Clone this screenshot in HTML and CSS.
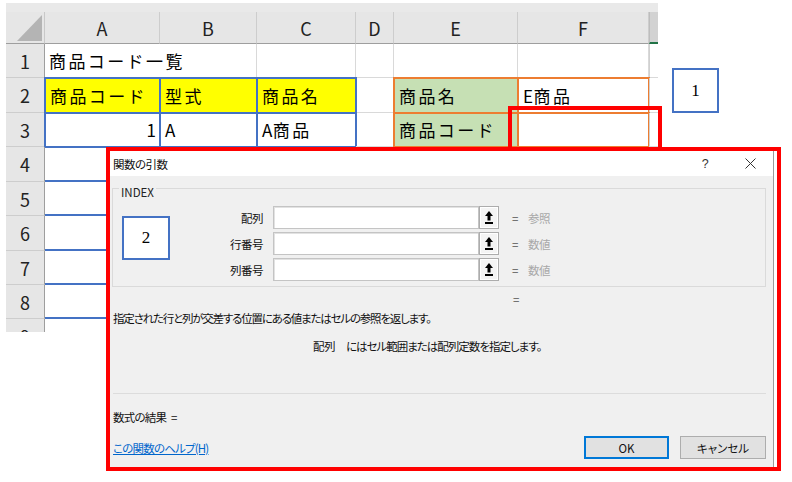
FILE: index.html
```html
<!DOCTYPE html>
<html lang="ja">
<head>
<meta charset="utf-8">
<link rel="stylesheet" href="styles.css">
</head>
<body>
<div class="page">
  <div class="sheet">
    <div class="strip"></div>
    <div class="grid">
      <div class="corner"><svg width="39" height="32" viewBox="0 0 39 32"><polygon points="36,3 36,29 11,29" fill="#b4b4b4"/></svg></div>
      <div class="ch">A</div><div class="ch">B</div><div class="ch">C</div><div class="ch">D</div><div class="ch">E</div><div class="ch">F</div><div class="ch ch-g"></div>

      <div class="rh">1</div>
      <div class="c c-over">商品コード一覧</div><div class="c"></div><div class="c"></div><div class="c"></div><div class="c"></div><div class="c"></div><div class="c cg"></div>

      <div class="rh">2</div>
      <div class="c tb yel">商品コード</div><div class="c tb yel">型式</div><div class="c tb yel">商品名</div><div class="c"></div><div class="c to grn">商品名</div><div class="c to"><span class="latin">E</span>商品</div><div class="c cg"></div>

      <div class="rh">3</div>
      <div class="c tb right">1</div><div class="c tb">A</div><div class="c tb"><span class="latin">A</span>商品</div><div class="c"></div><div class="c to grn">商品コード</div><div class="c to"></div><div class="c cg"></div>

      <div class="rh">4</div>
      <div class="c bb"></div><div class="c bb"></div><div class="c bb"></div><div class="c"></div><div class="c"></div><div class="c"></div><div class="c cg"></div>
      <div class="rh">5</div>
      <div class="c bb"></div><div class="c bb"></div><div class="c bb"></div><div class="c"></div><div class="c"></div><div class="c"></div><div class="c cg"></div>
      <div class="rh">6</div>
      <div class="c bb"></div><div class="c bb"></div><div class="c bb"></div><div class="c"></div><div class="c"></div><div class="c"></div><div class="c cg"></div>
      <div class="rh">7</div>
      <div class="c bb"></div><div class="c bb"></div><div class="c bb"></div><div class="c"></div><div class="c"></div><div class="c"></div><div class="c cg"></div>
      <div class="rh">8</div>
      <div class="c bb"></div><div class="c bb"></div><div class="c bb"></div><div class="c"></div><div class="c"></div><div class="c"></div><div class="c cg"></div>
      <div class="rh">9</div>
      <div class="c"></div><div class="c"></div><div class="c"></div><div class="c"></div><div class="c"></div><div class="c"></div><div class="c cg"></div>
    </div>
  </div>

  <div class="mark mark-1">1</div>
  <div class="hl"></div>

  <div class="frame">
    <div class="dlg">
      <div class="dlg-title">
        <span class="title-text">関数の引数</span>
        <span class="tool tool-help">?</span>
        <span class="tool"><svg width="11" height="11" viewBox="0 0 11 11"><path d="M0.5 0.5 L10.5 10.5 M10.5 0.5 L0.5 10.5" stroke="#333" stroke-width="1" fill="none"/></svg></span>
      </div>
      <div class="dlg-body">
        <div class="group">
          <div class="group-label">INDEX</div>
          <div class="args">
            <div class="arg-label">配列</div>
            <div class="arg-input"></div>
            <div class="arg-btn"><svg width="8" height="13" viewBox="0 0 8 13"><polygon points="4,0 8,5 0,5" fill="#000"/><rect x="2.5" y="5" width="3" height="4.5" fill="#000"/><rect x="0" y="11" width="8" height="2" fill="#000"/></svg></div>
            <div class="arg-eq"><span class="eq">=</span><span class="val">参照</span></div>

            <div class="arg-label">行番号</div>
            <div class="arg-input"></div>
            <div class="arg-btn"><svg width="8" height="13" viewBox="0 0 8 13"><polygon points="4,0 8,5 0,5" fill="#000"/><rect x="2.5" y="5" width="3" height="4.5" fill="#000"/><rect x="0" y="11" width="8" height="2" fill="#000"/></svg></div>
            <div class="arg-eq"><span class="eq">=</span><span class="val">数値</span></div>

            <div class="arg-label">列番号</div>
            <div class="arg-input"></div>
            <div class="arg-btn"><svg width="8" height="13" viewBox="0 0 8 13"><polygon points="4,0 8,5 0,5" fill="#000"/><rect x="2.5" y="5" width="3" height="4.5" fill="#000"/><rect x="0" y="11" width="8" height="2" fill="#000"/></svg></div>
            <div class="arg-eq"><span class="eq">=</span><span class="val">数値</span></div>
          </div>
        </div>
        <div class="eqline">=</div>
        <div class="desc1">指定された行と列が交差する位置にある値またはセルの参照を返します。</div>
        <div class="desc2"><span class="d2-name">配列</span><span class="d2-text">にはセル範囲または配列定数を指定します。</span></div>
        <div class="sep"></div>
        <div class="result">数式の結果<span class="result-eq">=</span></div>
        <div class="footer">
          <a class="help-link">この関数のヘルプ(H)</a>
          <div class="btn btn-ok">OK</div>
          <div class="btn">キャンセル</div>
        </div>
      </div>
    </div>
  </div>

  <div class="mark mark-2">2</div>
</div>
</body>
</html>
```

FILE: styles.css
```css
body {
  margin: 0;
  background: #fff;
}

.page {
  position: relative;
  width: 792px;
  height: 482px;
  overflow: hidden;
  background: #fff;
  font-family: "Noto Sans CJK JP", sans-serif;
  color: #000;
}

/* ---------- spreadsheet ---------- */
.sheet {
  margin: 3px 0 0 6px;
  width: 652px;
  height: 329px;
  overflow: hidden;
}

.strip {
  height: 9px;
  background: #e9e9e9;
}

.grid {
  display: grid;
  grid-template-columns: 39px 115px 97px 99px 38px 124px 131px 9px;
  grid-template-rows: 32px 34px 35px 34px 35px 34px 35px 34px 34px 34px;
}

.grid > div {
  box-sizing: border-box;
  min-width: 0;
}

.corner {
  background: #e6e6e6;
  border-right: 1px solid #c8c8c8;
  border-bottom: 1px solid #9e9e9e;
}

.corner svg {
  display: block;
}

.ch {
  background: #e6e6e6;
  border-right: 1px solid #cdcdcd;
  border-bottom: 1px solid #9e9e9e;
  display: flex;
  align-items: center;
  justify-content: center;
  font-size: 18px;
  color: #222;
}

.ch-g {
  background: #d2d2d2;
  border-right: none;
  border-left: 1px solid #bdbdbd;
  border-bottom: 2px solid #217346;
}

.rh {
  background: #e6e6e6;
  border-right: 1px solid #9e9e9e;
  border-bottom: 1px solid #cdcdcd;
  display: flex;
  align-items: center;
  justify-content: center;
  font-size: 18px;
  color: #222;
}

.c {
  border-right: 1px solid #d9d9d9;
  border-bottom: 1px solid #d9d9d9;
  display: flex;
  align-items: center;
  padding: 0 3px 1px 4px;
  font-size: 17px;
  letter-spacing: 2.4px;
  white-space: nowrap;
}

.latin {
  letter-spacing: 0.5px;
}

.c-over {
  border-right: none;
  overflow: visible;
}

.cg {
  border-right: none;
  border-left: 1px solid #d0d0d0;
}

.right {
  justify-content: flex-end;
  letter-spacing: 0;
}

.yel {
  background: #ffff00;
}

.grn {
  background: #c6e0b4;
}

.tb {
  border: 1px solid #4472c4;
  outline: 1px solid #4472c4;
}

.to {
  border: 1px solid #ed7d31;
  outline: 1px solid #ed7d31;
}

.bb {
  border-bottom: 2px solid #4472c4;
}

/* ---------- annotations ---------- */
.mark {
  position: absolute;
  box-sizing: border-box;
  border: 2px solid #4472c4;
  background: #fff;
  display: flex;
  align-items: center;
  justify-content: center;
  font-family: "Liberation Serif", serif;
  font-size: 17px;
  color: #000;
}

.mark-1 {
  left: 672px;
  top: 68px;
  width: 47px;
  height: 45px;
}

.mark-2 {
  left: 122px;
  top: 216px;
  width: 48px;
  height: 44px;
}

.hl {
  position: absolute;
  left: 508px;
  top: 106px;
  width: 154px;
  height: 46px;
  box-sizing: border-box;
  border: 4px solid #ff0000;
}

/* ---------- dialog ---------- */
.frame {
  position: absolute;
  left: 106px;
  top: 147px;
  width: 675px;
  height: 324px;
  box-sizing: border-box;
  border: 4px solid #ff0000;
  background: #fff;
  display: flex;
}

.dlg {
  width: 664px;
  height: 316px;
  box-sizing: border-box;
  border-right: 1px solid #9a9a9a;
  background: #f0f0f0;
  font-size: 11.5px;
  letter-spacing: -0.5px;
  font-feature-settings: "palt";
  color: #111;
}

.dlg-title {
  height: 25px;
  background: #fff;
  display: flex;
  align-items: center;
  padding: 0 8px 0 3px;
}

.title-text {
  flex: 1;
}

.tool {
  width: 30px;
  margin-left: 15px;
  display: flex;
  justify-content: center;
  align-items: center;
  color: #333;
}

.tool-help {
  font-size: 12.5px;
  font-family: "Liberation Sans", sans-serif;
}

.tool svg {
  display: block;
}

.dlg-body {
  padding: 12px 7px 8px 3px;
}

.group {
  margin-left: -1px;
  height: 99px;
  box-sizing: border-box;
  border: 1px solid #dadada;
}

.group-label {
  display: table;
  margin: -3px 0 0 6px;
  padding: 0 2px;
  background: #f0f0f0;
  font-size: 11.5px;
  line-height: 13px;
  letter-spacing: 0;
  font-feature-settings: normal;
  color: #222;
}

.args {
  display: grid;
  grid-template-columns: 160px 206px 20px auto;
  grid-auto-rows: 23px;
  row-gap: 3px;
  margin-top: 7px;
}

.arg-label {
  display: flex;
  align-items: center;
  justify-content: flex-end;
  padding-right: 10px;
}

.arg-input {
  box-sizing: border-box;
  background: #fff;
  border: 1px solid #c4c4c4;
  box-shadow: inset 1px 1px 0 #e2e2e2;
}

.arg-btn {
  box-sizing: border-box;
  border: 1px solid #acacac;
  background: #f4f4f4;
  box-shadow: inset 0 0 0 1px #fff;
  display: flex;
  align-items: center;
  justify-content: center;
}

.arg-btn svg {
  display: block;
}

.arg-eq {
  display: flex;
  align-items: center;
  padding-left: 13px;
}

.eq {
  width: 8px;
  color: #555;
}

.val {
  margin-left: 8px;
  color: #a8a8a8;
}

.eqline {
  margin-top: 5px;
  line-height: 14px;
  padding-left: 400px;
  color: #555;
}

.desc1 {
  margin-top: 5px;
  line-height: 14px;
  letter-spacing: -1.2px;
}

.desc2 {
  margin-top: 14px;
  line-height: 14px;
  padding-left: 200px;
}

.d2-name {
  margin-right: 11px;
}

.d2-text {
  letter-spacing: -1px;
}

.sep {
  margin-top: 40px;
  height: 1px;
  background: #dcdcdc;
}

.result {
  margin-top: 16px;
  line-height: 14px;
  letter-spacing: -0.8px;
}

.result-eq {
  margin-left: 5px;
}

.footer {
  margin-top: 12px;
  height: 23px;
  display: flex;
  align-items: center;
  gap: 11px;
}

.help-link {
  flex: 1;
  color: #0066cc;
  text-decoration: underline;
  letter-spacing: -0.8px;
}

.btn {
  width: 86px;
  height: 23px;
  box-sizing: border-box;
  border: 1px solid #adadad;
  background: #e1e1e1;
  display: flex;
  align-items: center;
  justify-content: center;
  letter-spacing: 0;
}

.btn-ok {
  width: 85px;
  border-color: #0078d7;
  box-shadow: inset 0 0 0 1px #0078d7;
}
```
